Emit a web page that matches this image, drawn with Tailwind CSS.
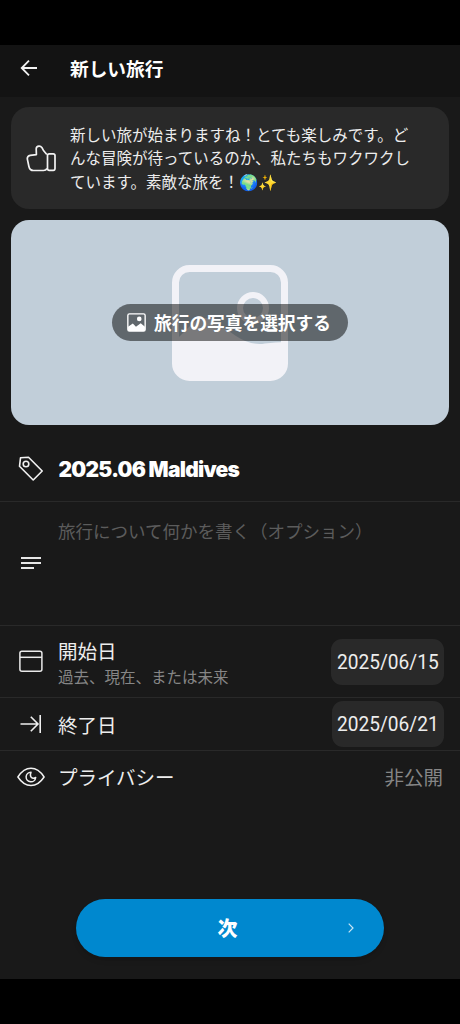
<!DOCTYPE html>
<html lang="ja">
<head>
<meta charset="utf-8">
<title>新しい旅行</title>
<script src="https://cdn.jsdelivr.net/npm/@tailwindcss/browser@4"></script>
</head>
<body class="bg-black">
<div class="w-[460px] h-[1024px] pt-[45px] pb-[45px] flex flex-col overflow-hidden font-['Noto_Sans_CJK_JP',sans-serif] text-[#ededed]">
  <header class="h-[52px] shrink-0 bg-[#131313] flex items-center pb-[6px]">
    <svg class="ml-[20px] w-[18px] h-[18px] shrink-0" viewBox="0 0 18 18" fill="none" stroke="#f2f2f2" stroke-width="1.8"><path d="M17 9H2M9 1.7 1.7 9 9 16.3"/></svg>
    <h1 class="ml-[32px] pb-px text-[18.7px] leading-[28px] font-bold text-white whitespace-nowrap">新しい旅行</h1>
  </header>
  <main class="flex-1 bg-[#191919] flex flex-col pt-[10px]">
    <section class="mx-[11px] h-[102px] shrink-0 rounded-[18px] bg-[#292929] flex items-center">
      <svg class="ml-[15px] mt-[2px] w-[31px] h-[28px] shrink-0" viewBox="0 0 31 28" fill="none" stroke="#f2f2f2" stroke-width="1.7" stroke-linejoin="round"><path d="M20.8 9.5 17.3 5.2 15.8 2.4Q14.8 1 13 1.1 10.3 1.2 10.2 3.8L10.4 9.6 4.2 10.4Q1.2 11 1.3 13.8L2.9 21.5Q3.8 25.5 7.4 25.5H17.5Q20 25.5 21 23.5"/><rect x="21.5" y="8.8" width="7.5" height="16.5" rx="1.7"/></svg>
      <p class="ml-[13px] text-[15.5px] leading-[23.4px] whitespace-nowrap">新しい旅が始まりますね！とても楽しみです。ど<br>んな冒険が待っているのか、私たちもワクワクし<br>ています。素敵な旅を！🌍✨</p>
    </section>
    <section class="relative mx-[11px] mt-[11px] h-[205px] shrink-0 rounded-[18px] bg-[#c1ced9] flex items-center justify-center">
      <svg class="absolute left-[160px] top-[44px] w-[118px] h-[118px]" viewBox="0 0 118 118"><rect x="4.5" y="4.5" width="109" height="109" rx="14" fill="none" stroke="#f2f2f7" stroke-width="7"/><path d="M4 77 22 59Q32 50 43 57L65 72Q80 82 94 79.500Q105 78 114 78V100Q114 114 100 114H18Q4 114 4 100Z" fill="#f2f2f7"/><circle cx="82" cy="44" r="13" fill="none" stroke="#f2f2f7" stroke-width="6"/></svg>
      <button class="relative w-[236px] h-[37px] rounded-full bg-black/50 flex items-center pl-[15px] text-[17.7px] leading-[26px] font-bold text-white whitespace-nowrap">
        <svg class="w-[19px] h-[19px] mr-[8px] -mt-px shrink-0" viewBox="0 0 18 18"><rect x=".8" y=".8" width="16.4" height="16.4" rx="1.5" fill="none" stroke="#fff" stroke-width="1.3"/><path d="M1 13 5.500 10 8.500 13 13 9.800 17 13V17H1Z" fill="#fff"/><circle cx="11.600" cy="5.600" r="2.200" fill="#fff"/></svg>
        <span class="pb-px">旅行の写真を選択する</span>
      </button>
    </section>
    <section class="h-[76px] shrink-0 mt-px border-b border-[#292929] flex items-center pt-[11px]">
      <svg class="ml-[18px] w-[26px] h-[26px] shrink-0" viewBox="0 0 26 26" fill="none" stroke="#f2f2f2" stroke-width="1.6" stroke-linejoin="round"><path d="M2.500 1.800 10.500 1.300 24.200 15 15.200 24 1.500 10.300Z"/><circle cx="8" cy="8" r="2.800"/></svg>
      <span class="ml-[14.5px] pt-px font-['Inter'] font-black text-[21px] leading-[30px] tracking-[-0.75px] text-white whitespace-nowrap">2025.06 Maldives</span>
    </section>
    <section class="h-[124px] shrink-0 border-b border-[#292929] flex">
      <svg class="ml-[21px] mt-[54px] w-[20px] h-[14px] shrink-0" viewBox="0 0 20 14" stroke="#e6e6e6" stroke-width="1.9"><path d="M0 2H20M0 7H20M0 12H13"/></svg>
      <span class="ml-[17px] mt-[16px] text-[17.5px] leading-[26px] text-[#5c5c5c] whitespace-nowrap">旅行について何かを書く（オプション）</span>
    </section>
    <section class="h-[72px] shrink-0 border-b border-[#292929] flex items-center">
      <svg class="ml-[19px] w-[24px] h-[23px] shrink-0" viewBox="0 0 24 23" fill="none" stroke="#e9e9e9" stroke-width="1.5"><rect x=".9" y="1.300" width="22" height="20" rx="2"/><path d="M1 7.300H23"/></svg>
      <div class="ml-[15px] pt-[2px] whitespace-nowrap">
        <div class="text-[19.5px] leading-[28px]">開始日</div>
        <div class="text-[15.5px] leading-[23px] text-[#868686]">過去、現在、または未来</div>
      </div>
      <div class="ml-auto mr-[16px] w-[113px] h-[46px] rounded-[11px] bg-[#292929] flex items-center justify-center font-['Roboto'] text-[21px]"><span class="pt-[2px] scale-x-[.91]">2025/06/15</span></div>
    </section>
    <section class="h-[53px] shrink-0 border-b border-[#292929] flex items-center">
      <svg class="ml-[20px] w-[22px] h-[20px] shrink-0" viewBox="0 0 22 20" fill="none" stroke="#eee" stroke-width="1.6"><path d="M.500 10H18M10.800 2.800 18 10 10.800 17.200M20.200 1V19"/></svg>
      <span class="ml-[16px] pt-[2px] text-[19.5px] leading-[28px]">終了日</span>
      <div class="ml-auto mr-[16px] w-[112px] h-[46px] rounded-[11px] bg-[#292929] flex items-center justify-center font-['Roboto'] text-[21px]"><span class="pt-[2px] scale-x-[.91]">2025/06/21</span></div>
    </section>
    <section class="h-[52px] shrink-0 flex items-center">
      <svg class="ml-[17px] w-[28px] h-[20px] shrink-0" viewBox="0 0 28 20" fill="none" stroke="#f0f0f0" stroke-width="1.5" stroke-linejoin="round"><path d="M.900 10Q6.500 1.300 14 1.300T27.100 10Q21.500 18.500 14 18.500T.900 10Z"/><path d="M14 5.200A4.800 4.800 0 1 0 18.700 10.500Q16 12 14.200 10.200 12.700 8.200 14 5.200Z"/></svg>
      <span class="ml-[13px] text-[19.5px] leading-[28px]">プライバシー</span>
      <span class="ml-auto mr-[17px] text-[19.5px] leading-[28px] text-[#868686]">非公開</span>
    </section>
    <button class="relative mt-auto mb-[22px] mx-auto w-[308px] h-[58px] rounded-full bg-[#0088cf] shadow-md flex items-center justify-center text-[20px] font-black text-white pr-[5px]">次
      <svg class="absolute right-[30px] top-[24px] w-[6px] h-[10px]" viewBox="0 0 6 10" fill="none" stroke="#c7e5f5" stroke-width="1.2"><path d="M.700.700 5 5 .700 9.300"/></svg>
    </button>
  </main>
</div>
</body>
</html>
